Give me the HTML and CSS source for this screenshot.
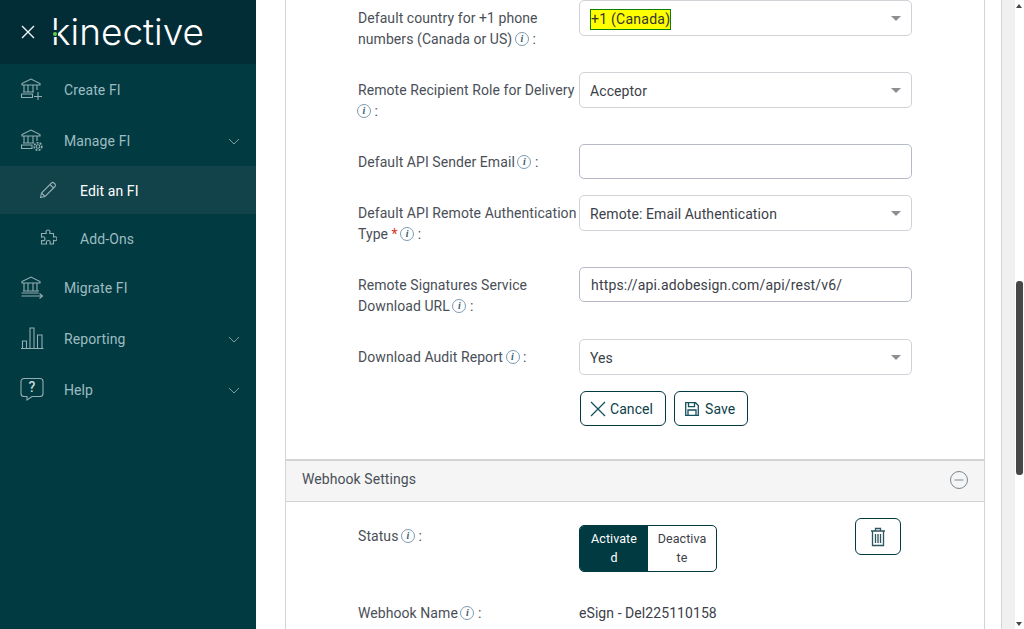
FILE: index.html
```html
<!DOCTYPE html>
<html lang="en">
<head>
<meta charset="utf-8">
<title>Kinective - Edit an FI</title>
<link rel="stylesheet" href="styles.css">
</head>
<body>
<div class="app">
  <aside class="sidebar">
    <header class="brand">
      <svg class="close-icon" width="16" height="16" viewBox="0 0 16 16"><path d="M2 2l12 12M14 2L2 14"/></svg>
      <div class="logo"><span class="logo-text">kinective</span><span class="logo-gap"></span><span class="logo-dot"></span></div>
    </header>
    <nav class="nav">
      <a class="nav-item">
        <svg class="nav-icon" width="24" height="26" viewBox="0 0 24 26"><path d="M2 7.500L11 3l9 4.500v1.500H2zM4 9v7M8 9v7M13 9v7M17 9v5M3.500 9h15M3 16h11M1.500 18h11v3.500h-11zM18 16v8M14 20.500h8"/></svg>
        <span>Create FI</span>
      </a>
      <a class="nav-item">
        <svg class="nav-icon" width="24" height="26" viewBox="0 0 24 26"><path d="M2 7.500L11 3l9 4.500v1.500H2zM4 9v7M8 9v7M13 9v7M17 9v5M3.500 9h15M3 16h11M1.500 18h10.500v3.500H1.500z"/><circle cx="18" cy="19.500" r="1.800"/><circle cx="18" cy="19.500" r="3.800" stroke-dasharray="2 1.200" stroke-width="1.600"/></svg>
        <span>Manage FI</span>
        <svg class="chevron" width="12" height="7" viewBox="0 0 12 7"><path d="M1 1l5 5 5-5"/></svg>
      </a>
      <a class="nav-item sub active">
        <svg class="nav-icon" width="18" height="18" viewBox="0 0 18 18"><path d="M1.500 16.500l1-4.500L12.500 2a1.800 1.800 0 0 1 2.500 0l1 1a1.800 1.800 0 0 1 0 2.500L6 15.500zM2.500 12l3.500 3.500M11 3.500l3.500 3.500"/></svg>
        <span>Edit an FI</span>
      </a>
      <a class="nav-item sub">
        <svg class="nav-icon" width="18" height="18" viewBox="0 0 18 18"><path d="M7 3a2 2 0 1 1 4 0c0 .6-.3 1-.3 1.500h3.800V8c.5 0 .9-.3 1.500-.3a2 2 0 1 1 0 4c-.6 0-1-.3-1.500-.3V15h-3.500c0-.6.3-1 .3-1.500a2 2 0 1 0-4 0c0 .5.300.9.300 1.500H2.500v-3.500c.5 0 1 .3 1.500.3a2 2 0 1 0 0-4c-.5 0-1 .3-1.500.3V4.500h4.800C7.300 4 7 3.600 7 3z"/></svg>
        <span>Add-Ons</span>
      </a>
      <a class="nav-item">
        <svg class="nav-icon" width="24" height="26" viewBox="0 0 24 26"><path d="M2 7.500L11 3l9 4.500v1.500H2zM4 9v8M8 9v8M13 9v8M17 9v8M3.500 9h15M3 17h16M1.500 19h17M1.500 22h21M19.500 19.500l3 2.500-3 2.500"/></svg>
        <span>Migrate FI</span>
      </a>
      <a class="nav-item">
        <svg class="nav-icon" width="24" height="26" viewBox="0 0 24 26"><path d="M1 23.500h22.500M2.500 23v-7h4v7M10 23V3h4v20M17.500 23V10h4.500v13"/></svg>
        <span>Reporting</span>
        <svg class="chevron" width="12" height="7" viewBox="0 0 12 7"><path d="M1 1l5 5 5-5"/></svg>
      </a>
      <a class="nav-item">
        <svg class="nav-icon" width="24" height="26" viewBox="0 0 24 26"><path d="M4 2.500h16a3 3 0 0 1 3 3v12a3 3 0 0 1-3 3h-8l-5 3.500v-3.500H4a3 3 0 0 1-3-3v-12a3 3 0 0 1 3-3z"/><text class="help-mark" x="12" y="16" text-anchor="middle">?</text></svg>
        <span>Help</span>
        <svg class="chevron" width="12" height="7" viewBox="0 0 12 7"><path d="M1 1l5 5 5-5"/></svg>
      </a>
    </nav>
  </aside>

  <main class="main">
    <div class="content">
      <section class="card">
        <form class="form">
          <div class="row">
            <label class="label">Default country for +1 phone numbers (Canada or US) <i class="info">i</i> :</label>
            <div class="select"><span class="marked">+1 (Canada)</span></div>
          </div>
          <div class="row">
            <label class="label">Remote Recipient Role for Delivery <i class="info">i</i> :</label>
            <div class="select">Acceptor</div>
          </div>
          <div class="row row-short">
            <label class="label">Default API Sender Email <i class="info">i</i> :</label>
            <div class="input"></div>
          </div>
          <div class="row">
            <label class="label">Default API Remote Authentication Type <b class="req">*</b> <i class="info">i</i> :</label>
            <div class="select">Remote: Email Authentication</div>
          </div>
          <div class="row">
            <label class="label">Remote Signatures Service Download URL <i class="info">i</i> :</label>
            <div class="input">https://api.adobesign.com/api/rest/v6/</div>
          </div>
          <div class="row row-short">
            <label class="label">Download Audit Report <i class="info">i</i> :</label>
            <div class="select">Yes</div>
          </div>
          <div class="actions">
            <button type="button" class="btn">
              <svg width="16" height="16" viewBox="0 0 16 16"><path d="M1 1l14 14M15 1L1 15"/></svg>
              Cancel
            </button>
            <button type="button" class="btn btn-save">
              <svg width="14" height="14" viewBox="0 0 14 14"><path d="M.7.700h9.800l2.800 2.800v9.800H.7zM3.500.700v4h6v-4M3 13.300V8h8v5.300"/></svg>
              Save
            </button>
          </div>
        </form>

        <div class="section-head">
          <span>Webhook Settings</span>
          <svg width="20" height="20" viewBox="0 0 20 20"><circle cx="10" cy="10" r="8.500"/><path d="M5.500 10h9"/></svg>
        </div>

        <div class="webhook">
          <div class="status-row">
            <label class="label">Status <i class="info">i</i> :</label>
            <div class="toggle">
              <span class="toggle-opt on">Activated</span>
              <span class="toggle-opt">Deactivate</span>
            </div>
            <button type="button" class="btn-trash" aria-label="Delete">
              <svg width="16" height="20" viewBox="0 0 16 20"><path d="M1 4h14M5.500 4V1.500h5V4M2.500 4v14.500h11V4M5.500 7v9M8 7v9M10.500 7v9"/></svg>
            </button>
          </div>
          <div class="name-row">
            <label class="label">Webhook Name <i class="info">i</i> :</label>
            <span class="value">eSign - Del225110158</span>
          </div>
        </div>
      </section>
    </div>
    <div class="gutter"></div>
    <div class="scrollbar">
      <span class="arrow up"></span>
      <span class="thumb"></span>
      <span class="arrow down"></span>
    </div>
  </main>
</div>
</body>
</html>
```
FILE: styles.css
```css
* { box-sizing: border-box; }
html, body { margin: 0; height: 100%; overflow: hidden; }
body { font-family: Roboto, "Liberation Sans", sans-serif; font-size: 14px; line-height: 21px; letter-spacing: .07px; color: #4a4f57; background: #fff; }

.app { display: flex; height: 629px; }

/* Sidebar */
.sidebar { width: 256px; flex: none; background: #023a42; display: flex; flex-direction: column; }
.brand { height: 64px; flex: none; background: #022c36; display: flex; align-items: center; padding-left: 20px; gap: 15px; }
.close-icon { fill: none; stroke: #f2f6f6; stroke-width: 1.400; }
.logo { position: relative; height: 44px; display: flex; align-items: center; }
.logo-text { font-family: Inter, Roboto, sans-serif; font-weight: 300; font-size: 37px; line-height: 44px; letter-spacing: 0; color: #fff; }
.logo-gap { position: absolute; left: 1px; top: 20px; width: 6px; height: 7px; background: #022c36; }
.logo-dot { position: absolute; left: 2px; top: 22px; width: 4px; height: 4px; border-radius: 50%; background: #62d24a; }

.nav { display: flex; flex-direction: column; }
.nav-item { position: relative; height: 51px; display: flex; align-items: center; padding: 2px 0 0 64px; color: #9dbcc0; font-size: 14px; letter-spacing: .1px; }
.nav-icon { position: absolute; left: 20px; top: 12px; fill: none; stroke: #93aeb2; stroke-width: 1.100; }
.nav-item.sub { height: 48px; padding-left: 80px; }
.nav-item.sub .nav-icon { left: 39px; top: 15px; }
.nav-item.active { background: #12434a; color: #fff; }
.chevron { position: absolute; left: 228px; top: 23px; fill: none; stroke: #7f9ea2; stroke-width: 1; }
.help-mark { font-family: Roboto, sans-serif; font-size: 14px; font-weight: 500; fill: #c9d8da; stroke: none; }

/* Main */
.main { flex: 1; min-width: 0; display: flex; }
.content { flex: 1; min-width: 0; padding-left: 29px; padding-right: 16px; overflow: hidden; }
.gutter { width: 14px; flex: none; background: #f0f0f0; border-left: 1px solid #d4d4d4; }
.scrollbar { width: 9px; flex: none; position: relative; background: #fff; }
.thumb { position: absolute; left: 1px; top: 281px; width: 7px; height: 194px; border-radius: 3px; background: #474747; }
.arrow { position: absolute; left: 1px; width: 0; height: 0; border-left: 3.500px solid transparent; border-right: 3.500px solid transparent; }
.arrow.up { top: 4px; border-bottom: 4px solid #474747; }
.arrow.down { top: 622px; border-top: 4px solid #474747; }

.card { width: 700px; border-left: 1px solid #d4d4d4; border-right: 1px solid #d4d4d4; background: #fff; }
.form { padding: 0 0 33px 72px; }

.row { display: flex; align-items: flex-start; min-height: 56px; margin-bottom: 16px; }
.row-short { min-height: 0; }
.label { width: 221px; flex: none; padding-top: 8px; color: #4a4f57; }
.info { display: inline-block; width: 14px; height: 14px; margin-left: -1px; border: 1px solid #7d9bb0; border-radius: 50%; font: italic bold 10px/12px "Liberation Serif", serif; text-align: center; letter-spacing: 0; color: #3b6072; vertical-align: 2px; }
.req { color: #d9342b; font-weight: 400; }

.select, .input { width: 333px; flex: none; border-radius: 5px; background: #fff; color: #3c4048; padding: 0 10px; letter-spacing: .1px; }
.select { position: relative; height: 36px; line-height: 36px; border: 1px solid #cfd2d6; }
.select::after { content: ""; position: absolute; right: 10px; top: 15px; border-left: 5.500px solid transparent; border-right: 5.500px solid transparent; border-top: 5.500px solid #8b8f94; }
.input { height: 35px; line-height: 35px; border: 1px solid #b5bac6; padding-left: 11px; letter-spacing: .17px; }
.marked { display: inline-block; height: 21px; line-height: 19px; border: 1px solid #0a7d0a; background: #ffff00; color: #333; letter-spacing: .25px; }

.actions { display: flex; gap: 8px; margin-left: 222px; }
.btn { height: 35px; display: flex; align-items: center; gap: 4px; padding: 1px 12px 0 9px; border: 1px solid #023a42; border-radius: 6px; background: #fff; font: inherit; letter-spacing: .07px; color: #0e3f4a; }
.btn-save { gap: 6px; padding-left: 10px; }
.btn svg { fill: none; stroke: #14505f; stroke-width: 1.300; margin-top: -1px; }

.section-head { height: 43px; display: flex; align-items: center; justify-content: space-between; padding: 0 15px 4px 16px; background: #f5f5f5; border-top: 2px solid #d4d4d4; border-bottom: 1px solid #d4d4d4; color: #4a4f57; }
.section-head svg { fill: none; stroke: #7b8794; stroke-width: 1; margin-top: 2px; }

.webhook { padding: 16px 0 60px 72px; }
.status-row { display: flex; align-items: flex-start; height: 54px; margin-bottom: 23px; }
.toggle { display: flex; width: 138px; height: 47px; margin-top: 7px; border: 1px solid #023a42; border-radius: 5px; overflow: hidden; font-size: 12.500px; line-height: 19px; }
.toggle-opt { flex: 1; padding: 3px 9px; text-align: center; word-break: break-all; color: #3c4048; }
.toggle-opt.on { background: #023a42; color: #fff; }
.btn-trash { width: 46px; height: 37px; margin-left: 138px; padding: 0; display: flex; align-items: center; justify-content: center; border: 1px solid #023a42; border-radius: 6px; background: #fff; }
.btn-trash svg { fill: none; stroke: #2c5560; stroke-width: 1.300; }
.name-row { display: flex; align-items: flex-start; }
.value { padding-top: 8px; color: #3c4048; }
```
